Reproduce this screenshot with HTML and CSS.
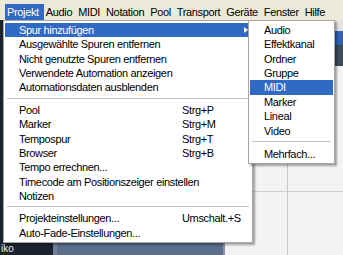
FILE: index.html
```html
<!DOCTYPE html>
<html lang="de">
<head>
    <meta charset="UTF-8">
    <meta name="viewport" content="width=device-width, initial-scale=1.0">
    <title>Projekt-Menü</title>
    <link rel="stylesheet" href="styles.css">
</head>
<body>
    <div class="app">
        <div class="menubar">
            <span class="mb-item active">Projekt</span>
            <span class="mb-item">Audio</span>
            <span class="mb-item">MIDI</span>
            <span class="mb-item">Notation</span>
            <span class="mb-item">Pool</span>
            <span class="mb-item">Transport</span>
            <span class="mb-item">Geräte</span>
            <span class="mb-item">Fenster</span>
            <span class="mb-item">Hilfe</span>
        </div>

        <div class="workspace">
            <div class="ws-left">
                <span class="ws-label">iko</span>
            </div>
            <div class="ws-panel"></div>
            <div class="ws-grid">
                <div class="ws-toolbar"></div>
            </div>
        </div>

        <div class="menu main-menu">
            <div class="mi active"><span>Spur hinzufügen</span><i class="arrow"></i></div>
            <div class="mi"><span>Ausgewählte Spuren entfernen</span></div>
            <div class="mi"><span>Nicht genutzte Spuren entfernen</span></div>
            <div class="mi"><span>Verwendete Automation anzeigen</span></div>
            <div class="mi"><span>Automationsdaten ausblenden</span></div>
            <div class="sep"></div>
            <div class="mi"><span>Pool</span><span>Strg+P</span></div>
            <div class="mi"><span>Marker</span><span>Strg+M</span></div>
            <div class="mi"><span>Tempospur</span><span>Strg+T</span></div>
            <div class="mi"><span>Browser</span><span>Strg+B</span></div>
            <div class="mi"><span>Tempo errechnen...</span></div>
            <div class="mi"><span>Timecode am Positionszeiger einstellen</span></div>
            <div class="mi"><span>Notizen</span></div>
            <div class="sep"></div>
            <div class="mi"><span>Projekteinstellungen...</span><span>Umschalt.+S</span></div>
            <div class="mi"><span>Auto-Fade-Einstellungen...</span></div>
        </div>

        <div class="menu sub-menu">
            <div class="mi">Audio</div>
            <div class="mi">Effektkanal</div>
            <div class="mi">Ordner</div>
            <div class="mi">Gruppe</div>
            <div class="mi active">MIDI</div>
            <div class="mi">Marker</div>
            <div class="mi">Lineal</div>
            <div class="mi">Video</div>
            <div class="sep sep-wide"></div>
            <div class="mi">Mehrfach...</div>
        </div>
    </div>
</body>
</html>
```

FILE: styles.css
```css
body {
    margin: 0;
    padding: 0;
    font-family: "Liberation Sans", Arial, sans-serif;
    font-size: 11px;
    color: #000;
    background-color: #1b2232;
}

.app {
    position: relative;
    width: 343px;
    height: 255px;
    overflow: hidden;
    display: flex;
    flex-direction: column;
}

/* menu bar */
.menubar {
    height: 20px;
    background-color: #ece9d8;
    display: flex;
    align-items: flex-end;
    padding-left: 5px;
    letter-spacing: -0.35px;
    white-space: nowrap;
}

.mb-item {
    height: 16px;
    line-height: 16px;
    padding: 0 4px 0 2px;
}

.mb-item.active {
    background-color: #316ac5;
    color: #fff;
    padding-right: 5px;
}

/* application behind the menus */
.workspace {
    flex: 1;
    display: flex;
}

.ws-left {
    width: 53px;
    background-color: #1b2232;
    border-right: 4px solid #6f7f95;
    display: flex;
    flex-direction: column;
    justify-content: flex-end;
}

.ws-label {
    color: #e8e8e8;
    font-size: 10px;
    padding: 0 0 1px 1px;
}

.ws-panel {
    width: 166px;
    background-color: #5b6f8d;
    border-right: 2px solid #8896a8;
}

.ws-grid {
    flex: 1;
    background-color: #f3f3f3;
    background-image:
        linear-gradient(to right, transparent 62px, #c8c8c8 62px, #c8c8c8 63px, transparent 63px),
        linear-gradient(to bottom, transparent 171px, #d0d0d0 171px, #d0d0d0 172px, transparent 172px);
}

.ws-toolbar {
    height: 46px;
    background: linear-gradient(to bottom, #e4e4e4 0, #e4e4e4 11px, #2f62b8 11px, #2f62b8 25px, #3d4b5e 25px);
}

/* drop-down menus */
.menu {
    position: absolute;
    background-color: #fff;
    border: 1px solid #a7a7a7;
    box-shadow: 2px 2px 2px rgba(0, 0, 0, 0.35);
    padding: 1.8px 1px 1.6px;
    letter-spacing: -0.35px;
}

.main-menu {
    left: 3px;
    top: 20px;
    width: 246px;
}

.sub-menu {
    left: 248px;
    top: 20px;
    width: 83px;
}

.mi {
    height: 14.4px;
    line-height: 14.4px;
    white-space: nowrap;
    display: grid;
    grid-template-columns: 163px 1fr auto;
    padding-left: 14px;
}

.sub-menu .mi {
    display: block;
}

.mi.active {
    background-color: #316ac5;
    color: #fff;
}

.arrow {
    grid-column: 3;
    align-self: center;
    width: 0;
    height: 0;
    margin-right: 3px;
    border-top: 3px solid transparent;
    border-bottom: 3px solid transparent;
    border-left: 4px solid #fff;
}

.sep {
    height: 8px;
    margin: 0 2px;
    background: linear-gradient(to bottom, transparent 3px, #c5c2b2 3px, #c5c2b2 4px, transparent 4px);
}

.sep-wide {
    height: 9px;
}
```
